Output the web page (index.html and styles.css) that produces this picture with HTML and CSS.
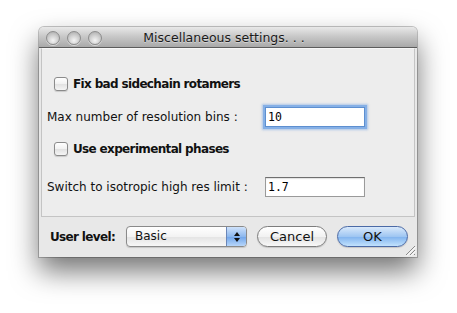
FILE: index.html
```html
<!DOCTYPE html>
<html lang="en">
<head>
  <meta charset="UTF-8" />
  <title>Miscellaneous settings...</title>
  <link rel="stylesheet" href="styles.css">
</head>
<body>

  <div class="window">
    <div class="titlebar">
      <div class="lights">
        <span class="light"></span>
        <span class="light"></span>
        <span class="light"></span>
      </div>
      <div class="title">Miscellaneous settings. . .</div>
    </div>

    <div class="content">
      <div class="panel">
        <label class="check-row first">
          <span class="checkbox"></span>
          <span class="check-label">Fix bad sidechain rotamers</span>
        </label>
        <div class="field-row bins">
          <span class="field-label">Max number of resolution bins :</span>
          <input class="field focused" type="text" value="10">
        </div>
        <label class="check-row phases">
          <span class="checkbox"></span>
          <span class="check-label">Use experimental phases</span>
        </label>
        <div class="field-row limit">
          <span class="field-label">Switch to isotropic high res limit :</span>
          <input class="field" type="text" value="1.7">
        </div>
      </div>

      <div class="footer">
        <span class="footer-label">User level:</span>
        <div class="select">
          <span class="select-value">Basic</span>
          <span class="select-arrows">
            <svg width="8" height="12" viewBox="0 0 8 12">
              <path d="M4 1 L7 5 L1 5 Z" fill="#111"/>
              <path d="M4 11 L7 7 L1 7 Z" fill="#111"/>
            </svg>
          </span>
        </div>
        <button class="btn">Cancel</button>
        <button class="btn primary">OK</button>
      </div>
    </div>

    <svg class="grip" width="12" height="12" viewBox="0 0 12 12">
      <path d="M11 2 L2 11 M11 6 L6 11 M11 10 L10 11" stroke="#8a8a8a" stroke-width="1"/>
      <path d="M11.8 2.8 L2.8 11.8 M11.8 6.8 L6.8 11.8" stroke="#fff" stroke-width="1"/>
    </svg>
  </div>

</body>
</html>
```

FILE: styles.css
```css
* {
  box-sizing: border-box;
}

html {
  background-color: #ffffff;
  min-height: 100%;
}

body {
  margin: 0;
  padding: 27px 0 0 39px;
  min-height: 313px;
  font-family: 'DejaVu Sans', 'Noto Sans', sans-serif;
  font-size: 12px;
  color: #111;
}

.window {
  position: relative;
  width: 378px;
  height: 230px;
  background-color: #e8e8e8;
  border-radius: 5px 5px 0 0;
  box-shadow: 0 0 0 1px rgba(0, 0, 0, 0.22), 0 14px 28px rgba(0, 0, 0, 0.55);
  display: flex;
  flex-direction: column;
}

/* title bar */

.titlebar {
  height: 21px;
  display: flex;
  align-items: center;
  background: linear-gradient(#e9e9e9, #c6c6c6 50%, #a9a9a9);
  border-bottom: 1px solid #5c5c5c;
  border-radius: 5px 5px 0 0;
}

.lights {
  display: flex;
  gap: 7px;
  padding-left: 7px;
  padding-top: 1px;
}

.light {
  width: 14px;
  height: 14px;
  border-radius: 50%;
  border: 1px solid #8d8d8d;
  background: radial-gradient(circle at 50% 70%, #f4f4f4 0%, #d2d2d2 45%, #a6a6a6 100%);
  box-shadow: 0 1px 0 rgba(255, 255, 255, 0.5);
}

.title {
  flex: 1;
  text-align: center;
  padding-right: 71px;
  font-size: 12.5px;
  color: #1a1a1a;
  text-shadow: 0 1px 0 rgba(255, 255, 255, 0.4);
}

/* main panel */

.content {
  flex: 1;
  display: flex;
  flex-direction: column;
}

.panel {
  height: 169px;
  margin: 0 2px;
  background-color: #ededed;
  border: 1px solid #c4c4c4;
  border-top: 1px solid #f7f7f7;
  display: flex;
  flex-direction: column;
}

.check-row {
  height: 23px;
  display: flex;
  align-items: center;
  gap: 5px;
  padding-left: 12px;
  font-weight: bold;
  letter-spacing: -0.65px;
}

.check-row.first {
  margin-top: 23px;
}

.check-row.phases {
  height: 22px;
  margin-top: 8px;
}

.checkbox {
  width: 14px;
  height: 14px;
  border: 1px solid #8b8b8b;
  border-radius: 3px;
  background: linear-gradient(#ffffff, #f1f1f1 50%, #e1e1e1 51%, #f5f5f5);
  box-shadow: 0 1px 1px rgba(0, 0, 0, 0.15);
}

.field-row {
  display: flex;
  align-items: center;
  padding-left: 5px;
}

.field-row.bins {
  height: 26px;
  margin-top: 9px;
}

.field-row.limit {
  height: 22px;
  margin-top: 16px;
}

.field-label {
  width: 218px;
}

.field {
  width: 100px;
  height: 20px;
  padding: 0 2px;
  border: 1px solid #9a9a9a;
  border-top-color: #6f6f6f;
  background-color: #ffffff;
  font-family: 'DejaVu Sans Mono', monospace;
  font-size: 11.5px;
  color: #000;
  outline: none;
  box-shadow: inset 0 1px 1px rgba(0, 0, 0, 0.12);
}

.field.focused {
  border-color: #5d8fd0;
  box-shadow: 0 0 0 2px #86b0e6, 0 0 2px 3px rgba(110, 160, 225, 0.5);
}

/* footer */

.footer {
  flex: 1;
  display: flex;
  align-items: center;
  padding: 0 0 1px 11px;
}

.footer-label {
  width: 76px;
  flex-shrink: 0;
  font-weight: bold;
  letter-spacing: -0.65px;
}

.select {
  width: 121px;
  height: 21px;
  flex-shrink: 0;
  display: flex;
  border: 1px solid #8a8a8a;
  border-radius: 4px;
  overflow: hidden;
  background: linear-gradient(#ffffff, #f3f3f3 50%, #e3e3e3 51%, #f7f7f7);
  box-shadow: 0 1px 1px rgba(0, 0, 0, 0.15);
}

.select-value {
  flex: 1;
  padding-left: 8px;
  line-height: 19px;
}

.select-arrows {
  width: 20px;
  display: flex;
  align-items: center;
  justify-content: center;
  border-left: 1px solid #6a86b8;
  background: linear-gradient(#cfe2fb, #8db8ee 50%, #6fa4ea 51%, #b7d6fa);
}

.btn {
  height: 21px;
  width: 70px;
  flex-shrink: 0;
  margin-left: 10px;
  padding: 0;
  border: 1px solid #7d7d7d;
  border-radius: 11px;
  background: linear-gradient(#ffffff, #f2f2f2 50%, #e2e2e2 51%, #f8f8f8);
  font-family: 'DejaVu Sans', 'Noto Sans', sans-serif;
  font-size: 13px;
  color: #111;
  box-shadow: 0 1px 1px rgba(0, 0, 0, 0.15);
}

.btn.primary {
  width: 71px;
  border-color: #4b6aa6;
  background: linear-gradient(#d9e9fb, #9fc6f2 50%, #7fb2ee 51%, #c2e2fd);
}

.grip {
  position: absolute;
  right: 1px;
  bottom: 1px;
}
```
